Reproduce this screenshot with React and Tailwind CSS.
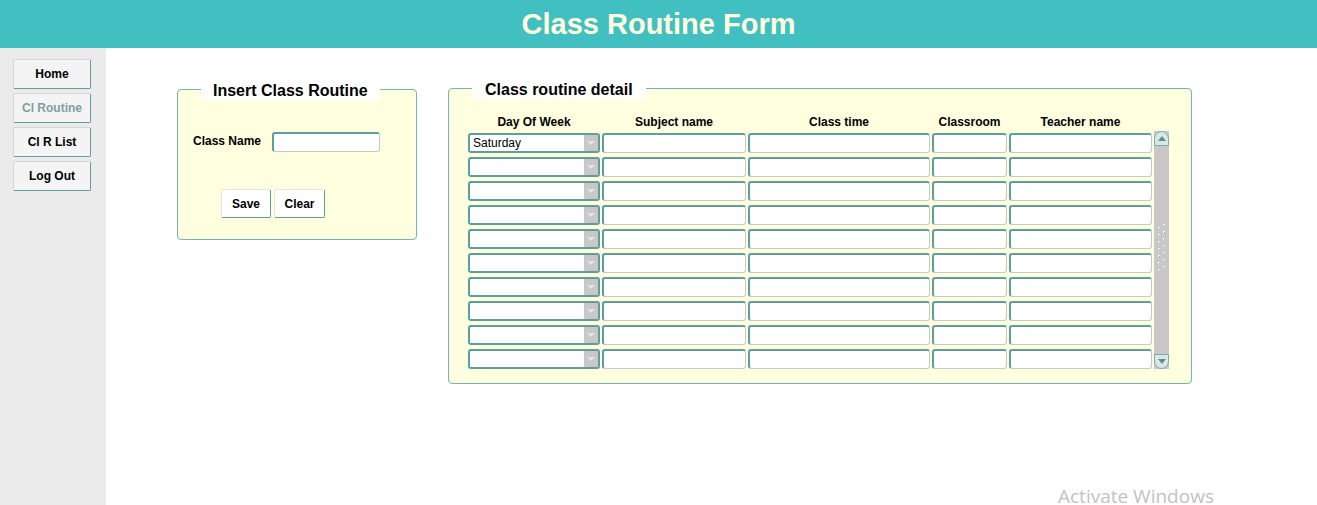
import React from "react";

const navItems = [
  { label: "Home", active: false },
  { label: "Cl Routine", active: true },
  { label: "Cl R List", active: false },
  { label: "Log Out", active: false },
];

const columns = [
  { title: "Day Of Week", width: "w-[132px]" },
  { title: "Subject name", width: "w-[144px]" },
  { title: "Class time", width: "w-[182px]" },
  { title: "Classroom", width: "w-[75px]" },
  { title: "Teacher name", width: "w-[143px]" },
];

const rows = Array.from({ length: 10 }, (_, i) => (i === 0 ? "Saturday" : ""));

function TextBox({ width }) {
  return (
    <div
      className={`${width} h-[20px] bg-white rounded-[3px] border-t-2 border-l-2 border-r border-b border-t-[#5f9ea0] border-l-[#5f9ea0] border-r-[#c9c9c9] border-b-[#c9c9c9]`}
    ></div>
  );
}

function DaySelect({ value }) {
  return (
    <div className="w-[132px] h-[20px] bg-white rounded-[3px] border-2 border-[#5f9e9e] flex items-center justify-between">
      <span className="pl-[3px] text-[12px] text-black leading-none">{value}</span>
      <span className="w-[14px] h-full bg-[#c8c8c8] flex items-center justify-center">
        <svg width="8" height="5" viewBox="0 0 8 5">
          <path d="M0 0 L8 0 L4 4 Z" fill="#e4e4e4" />
        </svg>
      </span>
    </div>
  );
}

function ScrollBar() {
  return (
    <div className="w-[15px] h-[238px] bg-[#c8c8c8] flex flex-col justify-between">
      <div className="h-[15px] rounded-t-[8px] border border-[#6fb0b0] bg-[#dde6e6] flex items-center justify-center">
        <svg width="8" height="5" viewBox="0 0 8 5">
          <path d="M0 5 L8 5 L4 0 Z" fill="#5f8f8f" />
        </svg>
      </div>
      <div className="flex justify-center">
        <svg width="10" height="54" viewBox="0 0 10 54">
          {[0, 1, 2, 3, 4, 5, 6].map((i) => (
            <g key={i}>
              <rect x="1" y={4 + i * 7} width="2" height="2" fill="#f0f6f6" />
              <rect x="2" y={5 + i * 7} width="1" height="1" fill="#7fb8b8" />
              <rect x="6" y={1 + i * 7} width="2" height="2" fill="#f0f6f6" />
              <rect x="7" y={2 + i * 7} width="1" height="1" fill="#7fb8b8" />
            </g>
          ))}
        </svg>
      </div>
      <div className="h-[15px] rounded-b-[8px] border border-[#6fb0b0] bg-[#dde6e6] flex items-center justify-center">
        <svg width="8" height="5" viewBox="0 0 8 5">
          <path d="M0 0 L8 0 L4 5 Z" fill="#5f8f8f" />
        </svg>
      </div>
    </div>
  );
}

export default function App() {
  return (
    <div
      className="relative h-[505px] w-[1317px] flex flex-col bg-white overflow-hidden"
      style={{ fontFamily: '"Liberation Sans", Arial, sans-serif' }}
    >
      {/* header */}
      <div className="h-[48px] bg-[#41bfc1] flex items-center justify-center">
        <h1 className="text-[29px] font-bold text-[#ffffe0] leading-none">Class Routine Form</h1>
      </div>

      <div className="flex flex-1">
        {/* sidebar */}
        <div className="w-[106px] bg-[#ebebeb] pt-[11px] pl-[13px] flex flex-col gap-[4px]">
          {navItems.map((item) => (
            <button
              key={item.label}
              className={`w-[78px] h-[30px] rounded-[2px] bg-[#f4f4f4] border border-t-[#d6d6d6] border-l-[#d6d6d6] border-r-[#5f9ea0] border-b-[#5f9ea0] text-[12px] font-bold ${
                item.active ? "text-[#7f9f9f] border-t-[#a9d3d3] border-l-[#a9d3d3]" : "text-black"
              }`}
            >
              {item.label}
            </button>
          ))}
        </div>

        {/* main */}
        <div className="flex-1 flex items-start pt-[29px] pl-[71px] gap-[31px]">
          {/* insert class routine */}
          <fieldset className="w-[240px] h-[162px] p-0 m-0 mt-[1px] bg-[#ffffe0] border border-[#74b5b5] rounded-[4px]">
            <legend className="ml-[23px] px-[12px] h-[22px] leading-[25px] bg-white text-[16px] font-bold text-black">
              Insert Class Routine
            </legend>
            <div className="pl-[15px] pt-[32px] flex items-center">
              <label className="w-[79px] text-[12px] font-bold text-black -mt-[2px]">Class Name</label>
              <TextBox width="w-[108px]" />
            </div>
            <div className="pl-[43px] pt-[37px] flex gap-[3px]">
              <button className="w-[50px] h-[29px] bg-white rounded-[2px] border border-t-[#e4e4e4] border-l-[#e4e4e4] border-r-[#5f9ea0] border-b-[#5f9ea0] text-[12px] font-bold">
                Save
              </button>
              <button className="w-[51px] h-[29px] bg-white rounded-[2px] border border-t-[#e4e4e4] border-l-[#e4e4e4] border-r-[#5f9ea0] border-b-[#5f9ea0] text-[12px] font-bold">
                Clear
              </button>
            </div>
          </fieldset>

          {/* class routine detail */}
          <fieldset className="w-[744px] h-[307px] p-0 m-0 bg-[#ffffe0] border border-[#74b5b5] rounded-[4px]">
            <legend className="ml-[23px] px-[13px] h-[22px] leading-[25px] bg-white text-[16px] font-bold text-black">
              Class routine detail
            </legend>
            <div className="pl-[19px] pt-[15px]">
              <div className="flex gap-[2px] h-[16px] items-center">
                {columns.map((c) => (
                  <div key={c.title} className={`${c.width} text-center text-[12px] font-bold text-black`}>
                    {c.title}
                  </div>
                ))}
              </div>
              <div className="flex gap-[2px] mt-[1px]">
                <div className="flex flex-col gap-[4px] pt-[2px]">
                  {rows.map((day, i) => (
                    <div key={i} className="flex gap-[2px]">
                      <DaySelect value={day} />
                      <TextBox width="w-[144px]" />
                      <TextBox width="w-[182px]" />
                      <TextBox width="w-[75px]" />
                      <TextBox width="w-[143px]" />
                    </div>
                  ))}
                </div>
                <ScrollBar />
              </div>
            </div>
          </fieldset>
        </div>
      </div>

      <div
        className="absolute left-[1058px] top-[487px] text-[19px] leading-[18px] text-[#c2c2c2]"
        style={{ fontFamily: '"Open Sans", "Noto Sans", sans-serif' }}
      >
        Activate Windows
      </div>
    </div>
  );
}
